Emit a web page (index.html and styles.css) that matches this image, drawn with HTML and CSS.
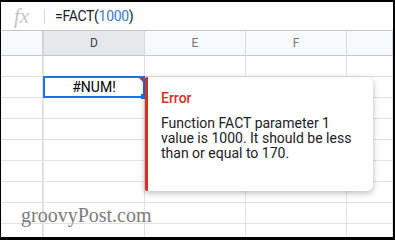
FILE: index.html
```html
<!DOCTYPE html>
<html lang="en">
<head>
    <meta charset="UTF-8">
    <meta name="viewport" content="width=device-width, initial-scale=1.0">
    <title>FACT error - Sheets</title>
    <link rel="stylesheet" href="styles.css">
</head>
<body>
    <div class="frame">
        <div class="formula-bar">
            <div class="fx">fx</div>
            <div class="divider"></div>
            <div class="formula">=FACT(<span class="num">1000</span>)</div>
        </div>

        <div class="sheet">
            <div class="col-head corner"></div>
            <div class="col-head selected">D</div>
            <div class="col-head">E</div>
            <div class="col-head">F</div>
            <div class="col-head"></div>

            <div class="row-head"></div><div class="cell"></div><div class="cell"></div><div class="cell"></div><div class="cell"></div>
            <div class="row-head"></div><div class="cell active">#NUM!</div><div class="cell"></div><div class="cell"></div><div class="cell"></div>
            <div class="row-head"></div><div class="cell"></div><div class="cell"></div><div class="cell"></div><div class="cell"></div>
            <div class="row-head"></div><div class="cell"></div><div class="cell"></div><div class="cell"></div><div class="cell"></div>
            <div class="row-head"></div><div class="cell"></div><div class="cell"></div><div class="cell"></div><div class="cell"></div>
            <div class="row-head"></div><div class="cell"></div><div class="cell"></div><div class="cell"></div><div class="cell"></div>
            <div class="row-head"></div><div class="cell"></div><div class="cell"></div><div class="cell"></div><div class="cell"></div>
            <div class="row-head"></div><div class="cell"></div><div class="cell"></div><div class="cell"></div><div class="cell"></div>
            <div class="row-head"></div><div class="cell"></div><div class="cell"></div><div class="cell"></div><div class="cell"></div>
        </div>

        <div class="error-popup">
            <div class="error-title">Error</div>
            <p class="error-text">Function FACT parameter 1 value is 1000. It should be less than or equal to 170.</p>
        </div>

        <div class="watermark">groovyPost.com</div>
    </div>
</body>
</html>
```

FILE: styles.css
```css
* {
    box-sizing: border-box;
}
body {
    margin: 0;
    font-family: Roboto, Arial, sans-serif;
    background: #000;
}
.frame {
    position: relative;
    width: 395px;
    height: 240px;
    border-style: solid;
    border-color: #000;
    border-width: 2px 2px 3px 1px;
    background: #fff;
    overflow: hidden;
}
.formula-bar {
    display: flex;
    align-items: center;
    height: 29px;
    border-bottom: 1px solid #c7c7c7;
}
.fx {
    width: 43px;
    padding-left: 13px;
    font-family: "Liberation Serif", serif;
    font-style: italic;
    font-size: 21px;
    color: #c4c4c4;
    line-height: 1;
}
.divider {
    width: 1px;
    height: 15px;
    background: #d5d5d5;
}
.formula {
    padding-left: 10px;
    font-size: 14px;
    color: #202124;
    letter-spacing: -0.3px;
}
.num {
    color: #3c78d8;
}
.sheet {
    display: grid;
    grid-template-columns: 43px 101px 101px 101px 1fr;
    grid-template-rows: 25px;
    grid-auto-rows: 21px;
}
.col-head {
    display: flex;
    align-items: center;
    justify-content: center;
    background: #f8f9fa;
    border-right: 1px solid #d9d9d9;
    border-bottom: 1px solid #c4c7c5;
    font-size: 12px;
    color: #777;
}
.col-head.selected {
    background: #e6e8ec;
    color: #3c4043;
}
.corner {
    border-right: 2px solid #d4d4d4;
}
.row-head {
    border-right: 2px solid #e0e0e0;
    border-bottom: 1px solid #e2e2e2;
}
.cell {
    border-right: 1px solid #e2e2e2;
    border-bottom: 1px solid #e2e2e2;
}
.cell.active {
    position: relative;
    display: flex;
    align-items: center;
    justify-content: center;
    margin: -1px 0 0 -1px;
    border: 2px solid #1a73e8;
    font-size: 14px;
    color: #000;
}
.cell.active::before {
    content: "";
    position: absolute;
    right: -3px;
    bottom: -3px;
    width: 5px;
    height: 5px;
    background: #1a73e8;
}
.cell.active::after {
    content: "";
    position: absolute;
    top: 0;
    right: 0;
    border-style: solid;
    border-width: 0 4px 4px 0;
    border-color: transparent #d93025 transparent transparent;
}
.error-popup {
    position: absolute;
    left: 144px;
    top: 75px;
    width: 228px;
    height: 114px;
    padding: 11px 12px 0 13px;
    background: #fff;
    border-left: 3px solid #d93025;
    border-radius: 2px 6px 6px 2px;
    box-shadow: 0 2px 6px rgba(0, 0, 0, 0.28);
}
.error-title {
    font-size: 14px;
    line-height: 20px;
    font-weight: 500;
    color: #d93025;
}
.error-text {
    margin: 8px 0 0;
    font-size: 14px;
    line-height: 15px;
    color: #202124;
}
.watermark {
    position: absolute;
    left: 20px;
    top: 202px;
    font-family: "Liberation Serif", serif;
    font-size: 20px;
    color: #7c7c7c;
}
```
